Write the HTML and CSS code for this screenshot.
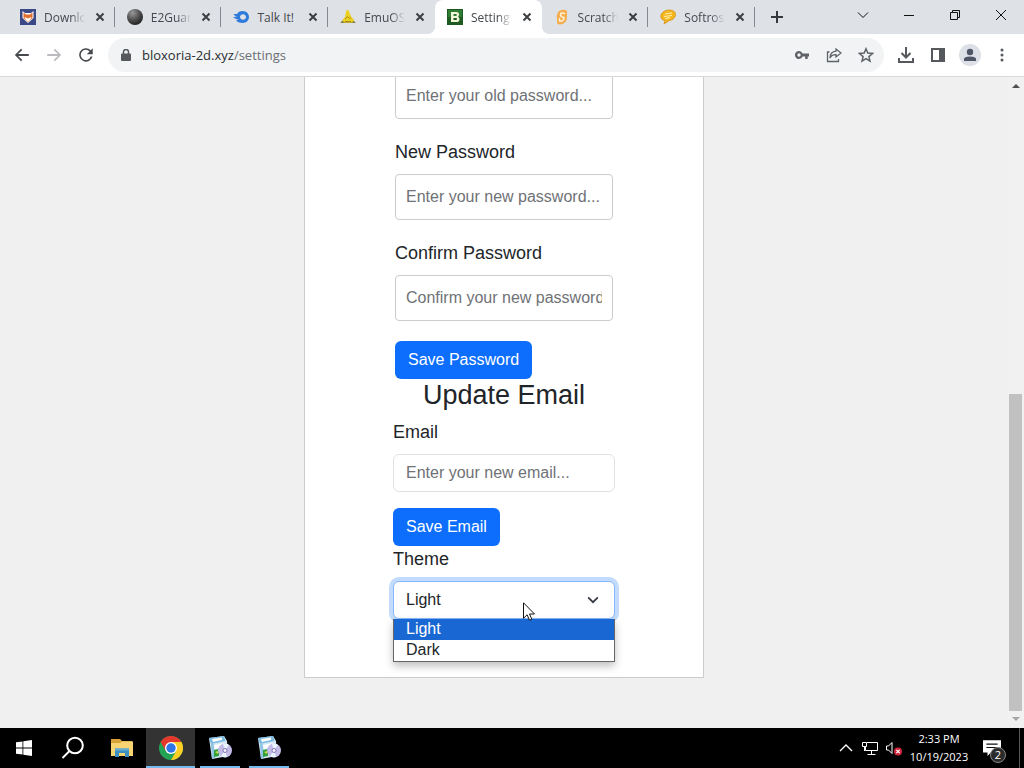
FILE: index.html
```html
<!DOCTYPE html>
<html lang="en">
<head>
<meta charset="utf-8">
<meta name="viewport" content="width=device-width, initial-scale=1">
<title>Settings</title>
<link rel="stylesheet" href="styles.css">
</head>
<body>
<header class="browser">
  <div class="titlebar">
    <div class="tabs">
      <div class="tab">
        <svg class="favicon" viewBox="0 0 16 16" aria-hidden="true"><path fill="#3b4a86" d="M0 0h16v16H0z"/><path fill="#fff" d="M2.500 2 5 4h6l2.500-2v7L8 14 2.500 9z"/><path fill="#e0702d" d="m3.500 3.500 2.500 2h4l2.500-2V9L8 13 3.500 9z"/><path fill="#fff" d="M4.500 8 8 9.500 11.500 8 10 11l-2 1.500L6 11z"/></svg>
        <button class="tab-title">Download</button><button class="tab-close" aria-label="Close tab"><svg viewBox="0 0 10 10"><path d="m1.500 1.500 7 7m0-7-7 7"/></svg></button>
      </div>
      <div class="tab">
        <svg class="favicon" viewBox="0 0 16 16" aria-hidden="true"><defs><radialGradient id="ball" cx=".35" cy=".25" r=".8"><stop offset="0" stop-color="#999"/><stop offset=".5" stop-color="#555"/><stop offset="1" stop-color="#1d1d1d"/></radialGradient></defs><circle cx="8" cy="8" r="8" fill="url(#ball)"/></svg>
        <button class="tab-title">E2Guardian</button><button class="tab-close" aria-label="Close tab"><svg viewBox="0 0 10 10"><path d="m1.500 1.500 7 7m0-7-7 7"/></svg></button>
      </div>
      <div class="tab">
        <svg class="favicon" viewBox="0 0 16 16" aria-hidden="true"><path fill="#2f7bdc" fill-rule="evenodd" d="M4 5C5 3 7 2 9.500 2 13.500 2 16 4.800 16 8s-2.500 6-6.500 6C6.500 14 4 13 3 11l3-.5Q2 10 0 8l4-.2Q1.500 7 .5 5zm6 .3C8.500 5.300 7 6.500 7 8s1.500 2.700 3 2.700S13 9.500 13 8s-1.500-2.700-3-2.700z"/></svg>
        <button class="tab-title tab-title-whole">Talk It!</button><button class="tab-close" aria-label="Close tab"><svg viewBox="0 0 10 10"><path d="m1.500 1.500 7 7m0-7-7 7"/></svg></button>
      </div>
      <div class="tab tab-plain">
        <svg class="favicon" viewBox="0 0 16 16" aria-hidden="true"><path fill="#8f8340" d="m0 14 5-5h6l5 5z"/><path fill="#ecd022" d="M6.500 1h2L10 5l1.500 3 2.500 3-2 2.500H4L2.500 11 5 8l.500-3z"/><path fill="none" stroke="#a88b14" d="m5 10 2.500-2.500 2 2 1.500-1M5 12.500h6"/></svg>
        <button class="tab-title">EmuOS v1</button><button class="tab-close" aria-label="Close tab"><svg viewBox="0 0 10 10"><path d="m1.500 1.500 7 7m0-7-7 7"/></svg></button>
      </div>
      <div class="tab tab-active">
        <svg class="favicon" viewBox="0 0 16 16" aria-hidden="true"><path fill="#1e5b22" d="M0 0h16v16H0z"/><path fill="#2f7d32" d="M1 1h14v7H1z"/><path fill="#f2f7d8" fill-rule="evenodd" d="M4 3h5.500Q12 3 12 5.500 12 7 11 7.700q1.500.6 1.500 2.500 0 2.800-3 2.800H4zm2.500 2v2H9q.8 0 .8-1T9 5zm0 4v2h2.700q.8 0 .8-1t-.8-1z"/></svg>
        <button class="tab-title">Settings</button><button class="tab-close" aria-label="Close tab"><svg viewBox="0 0 10 10"><path d="m1.500 1.500 7 7m0-7-7 7"/></svg></button>
      </div>
      <div class="tab">
        <svg class="favicon" viewBox="0 0 16 16" aria-hidden="true"><path fill="#f5ad4c" d="M5 2q5-2.500 8 0v6q0 7-7 7.500-3 0-3-2.500V9q-1-4 2-7z"/><path fill="none" stroke="#fff1d8" stroke-width="1.500" stroke-linecap="round" stroke-linejoin="round" d="M10.500 4.500Q6.500 3 6.500 5.500T10 8.500q0 4-4.500 3.500V9.500"/></svg>
        <button class="tab-title">Scratch -</button><button class="tab-close" aria-label="Close tab"><svg viewBox="0 0 10 10"><path d="m1.500 1.500 7 7m0-7-7 7"/></svg></button>
      </div>
      <div class="tab">
        <svg class="favicon" viewBox="0 0 16 16" aria-hidden="true"><path fill="#f4b51d" stroke="#d3921a" stroke-width=".8" d="M9 1c4 0 6.500 1.500 6.500 4.500S13 11 9.500 11.500L4 15l1-3.500C2 11 .8 9.500.8 7.500.8 4 4.500 1 9 1z"/><path fill="none" stroke="#fff0ad" stroke-width="1.200" d="m5 5 7-1M4 7.500l8-1M5 9.500l5-.8"/></svg>
        <button class="tab-title">Softros LAN</button><button class="tab-close" aria-label="Close tab"><svg viewBox="0 0 10 10"><path d="m1.500 1.500 7 7m0-7-7 7"/></svg></button>
      </div>
    </div>
    <button class="new-tab" aria-label="New tab"><svg viewBox="0 0 12 12"><path d="M6 0v12M0 6h12"/></svg></button>
    <div class="window-controls">
      <button aria-label="Search tabs"><svg viewBox="0 0 12 12"><path d="m1 3.500 5 5 5-5"/></svg></button>
      <button aria-label="Minimize"><svg viewBox="0 0 12 12"><path d="M1 6.500h10"/></svg></button>
      <button aria-label="Restore"><svg viewBox="0 0 12 12"><path d="M1.500 3.500h7v7h-7zM3.500 3.500v-2h7v7h-2"/></svg></button>
      <button aria-label="Close"><svg viewBox="0 0 12 12"><path d="m1 1 10 10M11 1 1 11"/></svg></button>
    </div>
  </div>
  <nav class="toolbar" aria-label="Browser toolbar">
    <button class="tool" aria-label="Back"><svg viewBox="0 0 24 24"><path fill="#45484c" d="M21 10.800H6.800l5.600-5.400L10.700 3.700l-8.200 8.300 8.200 8.300 1.700-1.700-5.600-5.400H21z"/></svg></button>
    <button class="tool" aria-label="Forward" disabled><svg viewBox="0 0 24 24"><path fill="#b9bbbe" d="m13.300 3.700-1.700 1.700 5.600 5.400H3v2.400h14.200l-5.600 5.400 1.700 1.700 8.200-8.300z"/></svg></button>
    <button class="tool" aria-label="Reload"><svg viewBox="0 0 24 24"><path fill="#45484c" d="M18.400 5.600A9 9 0 1 0 20.700 14h-2.400A6.800 6.800 0 1 1 16.800 7.200L13 11h8V3z"/></svg></button>
    <div class="omnibox">
      <svg class="lock" viewBox="0 0 10 12" aria-hidden="true"><path fill="none" stroke="#55585c" stroke-width="1.500" d="M2.500 5.500V3a2.500 2.500 0 0 1 5 0v2.500"/><rect y="4.500" width="10" height="7.500" rx="1" fill="#55585c"/></svg>
      <a class="address" href="#settings">bloxoria-2d.xyz<span class="path">/settings</span></a>
      <button class="tool" aria-label="Saved passwords"><svg viewBox="0 0 16 16"><path fill="#5f6368" fill-rule="evenodd" d="M8.600 6.500H15v3h-1.300V12h-2.500V9.500H8.600A4 4 0 1 1 8.600 6.500zM5 6.300A1.700 1.700 0 1 0 5 9.700a1.700 1.700 0 0 0 0-3.400z"/></svg></button>
      <button class="tool" aria-label="Share"><svg viewBox="0 0 16 16"><path fill="none" stroke="#5f6368" stroke-width="1.300" d="M3.500 5H1.500v9.500h11V12M10 2l5 4-5 4V7.700C7 7.500 5 9 4 11c.2-4 2.500-6.500 6-6.800z"/></svg></button>
      <button class="tool" aria-label="Bookmark"><svg viewBox="0 0 16 16"><path fill="none" stroke="#5f6368" stroke-width="1.500" d="m8 1.800 1.800 4.300 4.700.4-3.600 3.100 1.100 4.600L8 11.700l-4 2.500 1.100-4.600L1.500 6.500l4.700-.4z"/></svg></button>
    </div>
    <button class="tool" aria-label="Downloads"><svg viewBox="0 0 18 18"><path fill="none" stroke="#55585c" stroke-width="2" d="M9 1v10M4.500 7 9 11.500 13.500 7M2 12v4h14v-4"/></svg></button>
    <button class="tool" aria-label="Side panel"><svg viewBox="0 0 18 18"><path fill="none" stroke="#55585c" stroke-width="2" d="M3 3h12v12H3z"/><path fill="#55585c" d="M10 3h5v12h-5z"/></svg></button>
    <button class="tool profile" aria-label="Profile"><svg viewBox="0 0 16 16"><circle cx="8" cy="5" r="3.200" fill="#4d5566"/><path fill="#4d5566" d="M2 14v-2q0-2.500 6-2.500t6 2.500v2z"/></svg></button>
    <button class="tool menu" aria-label="Menu"><svg viewBox="0 0 16 16"><g fill="#55585c"><circle cx="8" cy="3" r="1.500"/><circle cx="8" cy="8" r="1.500"/><circle cx="8" cy="13" r="1.500"/></g></svg></button>
  </nav>
</header>

<div class="viewport">
  <main class="page">
    <div class="panel">
      <form class="password-form">
        <input class="field old-password" type="password" placeholder="Enter your old password..." aria-label="Old password">
        <label for="new-password">New Password</label>
        <input class="field" id="new-password" type="password" placeholder="Enter your new password...">
        <label for="confirm-password">Confirm Password</label>
        <input class="field" id="confirm-password" type="password" placeholder="Confirm your new password...">
        <button class="primary" type="button">Save Password</button>
      </form>
      <h2>Update Email</h2>
      <form class="email-form">
        <label for="email">Email</label>
        <input class="control" id="email" type="email" placeholder="Enter your new email...">
        <button class="primary" type="button">Save Email</button>
        <label for="theme">Theme</label>
        <div class="select-wrap">
          <select class="control focused" id="theme"><option>Light</option><option>Dark</option></select>
          <svg class="chevron" viewBox="0 0 16 16" aria-hidden="true"><path d="m3 5.500 5 5 5-5"/></svg>
          <ul class="options" role="listbox" aria-label="Theme">
            <li role="option" aria-selected="true">Light</li>
            <li role="option" aria-selected="false">Dark</li>
          </ul>
          <svg class="cursor" viewBox="0 0 12 19" aria-hidden="true"><path fill="#fff" stroke="#111" d="M.5.800v15.500l3.600-3.500 2.400 5.400 2.300-1-2.300-5.200h5z"/></svg>
        </div>
      </form>
    </div>
  </main>
  <div class="scrollbar" aria-hidden="true">
    <svg viewBox="0 0 16 17"><path fill="#505050" d="m8 7 4 4H4z"/></svg>
    <div class="track"><div class="thumb"></div></div>
    <svg viewBox="0 0 16 17"><path fill="#a3a3a3" d="m8 10 4-4H4z"/></svg>
  </div>
</div>

<footer class="taskbar">
  <button class="task task-start" aria-label="Start"><svg class="start-icon" viewBox="0 0 16 16"><path fill="#fff" d="m0 2.300 6.500-.9v6.200H0zM7.300 1.300 16 0v7.600H7.300zM0 8.400h6.500v6.200L0 13.700zM7.300 8.400H16V16l-8.700-1.300z"/></svg></button>
  <button class="task" aria-label="Search"><svg viewBox="0 0 24 24"><g fill="none" stroke="#fff" stroke-width="2"><circle cx="14" cy="9.500" r="7.800"/><path d="M8.500 15 1.500 22"/></g></svg></button>
  <button class="task" aria-label="File Explorer"><svg viewBox="0 0 24 24"><path fill="#d9a33a" d="M1 3h9l2 2h10v5H1z"/><path fill="#f8d572" d="M1 7h9l2-1.500h11V20H1z"/><path fill="#3f8fc0" d="M5 12.500h14V21h-4v-4H9v4H5z"/><path fill="#65afd6" d="M5 12.500h14v2H5z"/></svg></button>
  <button class="task task-current" aria-label="Google Chrome"><svg viewBox="0 0 24 24"><circle cx="12" cy="12" r="12" fill="#23a455"/><path fill="#e5382c" d="M1.600 6A12 12 0 0 1 22.400 6H12L6.800 15z"/><path fill="#fbcf25" d="M22.400 6A12 12 0 0 1 12 24l5.200-9L12 6z"/><circle cx="12" cy="12" r="6" fill="#fff"/><circle cx="12" cy="12" r="4.700" fill="#2f75e8"/></svg></button>
  <button class="task task-open" aria-label="Setup"><svg viewBox="0 0 24 24"><path fill="#d4e9f4" d="m1 2 15-2 3 5 1 15-16 3z"/><path fill="#7dbbe0" d="m1 2 15-2 1.500 5L3 8z"/><path fill="#fff" d="m4 3 10-1.500v2.500L5 6zM6 9l11-2v4L7 13z"/><path fill="#8fc4e2" d="m3 8 2.500-.5L7 22l-3 1z"/><path fill="#2f9f3b" d="m6 14 5-1v7l-5 1z"/><path fill="#d8dc46" d="m7 16 3-1v3z"/><circle cx="17" cy="14.500" r="7" fill="#c3bce6"/><path fill="#e9f5ff" d="m17 14.500-2-6.500q4-1 6 1zM17 14.500l2 6.500q-4 1-6-1z"/><circle cx="17" cy="14.500" r="2" fill="#f7f5ff" stroke="#8177ba"/></svg></button>
  <button class="task task-open" aria-label="Setup, second window"><svg viewBox="0 0 24 24"><path fill="#d4e9f4" d="m1 2 15-2 3 5 1 15-16 3z"/><path fill="#7dbbe0" d="m1 2 15-2 1.500 5L3 8z"/><path fill="#fff" d="m4 3 10-1.500v2.500L5 6zM6 9l11-2v4L7 13z"/><path fill="#8fc4e2" d="m3 8 2.500-.5L7 22l-3 1z"/><path fill="#2f9f3b" d="m6 14 5-1v7l-5 1z"/><path fill="#d8dc46" d="m7 16 3-1v3z"/><circle cx="17" cy="14.500" r="7" fill="#c3bce6"/><path fill="#e9f5ff" d="m17 14.500-2-6.500q4-1 6 1zM17 14.500l2 6.500q-4 1-6-1z"/><circle cx="17" cy="14.500" r="2" fill="#f7f5ff" stroke="#8177ba"/></svg></button>
  <div class="tray">
    <button aria-label="Show hidden icons"><svg viewBox="0 0 16 16"><path fill="none" stroke="#fff" stroke-width="1.400" d="m2 11 6-6 6 6"/></svg></button>
    <button aria-label="Network"><svg viewBox="0 0 16 16"><path fill="none" stroke="#fff" d="M5 2.500h10.500v8H3.500V7M9.500 11v3M5.500 14.500h8M.5 2.500h4v4h-4zM2.500 7v4"/></svg></button>
    <button aria-label="Volume muted"><svg viewBox="0 0 16 16"><path fill="none" stroke="#fff" d="M.5 6h2L6 2.500v11L2.500 10h-2z"/><circle cx="12" cy="11.500" r="4" fill="#d3263c"/><path stroke="#fff" stroke-width="1.200" d="m10.300 9.800 3.400 3.400m0-3.400-3.400 3.400"/></svg></button>
    <button class="clock"><span>2:33 PM</span><span>10/19/2023</span></button>
    <button class="notifications" aria-label="2 notifications"><svg viewBox="0 0 16 16"><path fill="#fff" d="M0 1h16v11H7l-3 3v-3H0z"/><path stroke="#111" d="M3 4.500h10M3 7.500h10"/></svg><span class="badge">2</span></button>
    <div class="desktop-edge"></div>
  </div>
</footer>
</body>
</html>
```

FILE: styles.css
```css
* { box-sizing: border-box; }

body {
  margin: 0;
  height: 100vh;
  display: flex;
  flex-direction: column;
  overflow: hidden;
  background: #f0f0f0;
  color: #212529;
  font-family: "Liberation Sans", Arial, sans-serif;
  font-size: 16px;
}

button {
  padding: 0;
  border: 0;
  background: none;
  color: inherit;
  font: inherit;
}

svg { display: block; }

/* Browser frame */
.browser {
  flex: none;
  font-family: "Open Sans", "Noto Sans", sans-serif;
  border-bottom: 1px solid #d5d8dc;
  background: #fff;
}

.titlebar {
  height: 34px;
  display: flex;
  align-items: stretch;
  padding-left: 8px;
  background: #dee1e6;
}

.tabs { display: flex; flex: 0 1 747px; min-width: 0; }

.tab {
  flex: 1 1 0;
  min-width: 0;
  display: flex;
  align-items: center;
  padding: 0 10px 0 12px;
  position: relative;
  color: #45494e;
  font-size: 12px;
}

.tab::after {
  content: "";
  position: absolute;
  right: 0;
  top: 7px;
  width: 1px;
  height: 20px;
  background: #85898f;
}

.tab.tab-plain::after { display: none; }

.tab.tab-active {
  background: #fff;
  border-radius: 8px 8px 0 0;
}

.tab-active::before,
.tab.tab-active::after {
  content: "";
  position: absolute;
  top: auto;
  bottom: 0;
  width: 8px;
  height: 8px;
}

.tab-active::before {
  left: -8px;
  background: radial-gradient(circle at 0 0, #dee1e6 8px, #fff 8px);
}

.tab.tab-active::after {
  right: -8px;
  background: radial-gradient(circle at 100% 0, #dee1e6 8px, #fff 8px);
}

.favicon { flex: none; width: 16px; height: 16px; }

.tab-title {
  flex: 1;
  min-width: 0;
  margin: 0 10px 0 8px;
  overflow: hidden;
  white-space: nowrap;
  text-align: left;
  mask-image: linear-gradient(to right, #000 65%, transparent);
}

.tab-title-whole { mask-image: none; }

.tab-close { flex: none; }
.tab-close svg { width: 10px; height: 10px; }
.tab-close path { stroke: #3c4043; stroke-width: 2; }

.new-tab { flex: none; width: 44px; display: grid; place-items: center; }
.new-tab svg { width: 12px; height: 12px; }
.new-tab path { stroke: #35383c; stroke-width: 2; }

.window-controls { flex: none; display: flex; margin-left: auto; align-items: center; height: 29px; }
.window-controls button { width: 46px; height: 28px; display: grid; place-items: center; }
.window-controls svg { width: 12px; height: 12px; }
.window-controls path { fill: none; stroke: #111; }

.toolbar {
  height: 42px;
  display: flex;
  align-items: center;
  padding: 0 6px;
}

.tool {
  flex: none;
  width: 32px;
  height: 32px;
  display: grid;
  place-items: center;
}

.tool svg { width: 18px; height: 18px; }

.omnibox {
  flex: 1;
  min-width: 0;
  height: 34px;
  display: flex;
  align-items: center;
  margin: 0 6px;
  padding: 0 2px 0 13px;
  border-radius: 17px;
  background: #f1f3f4;
}

.omnibox .tool svg { width: 16px; height: 16px; }
.lock { flex: none; width: 10px; height: 12px; }

.address {
  flex: 1;
  min-width: 0;
  margin-left: 11px;
  overflow: hidden;
  white-space: nowrap;
  color: #2a2d31;
  font-size: 13px;
  text-decoration: none;
}

.path { color: #6a6f75; }

.profile::before {
  content: "";
  grid-area: 1 / 1;
  width: 22px;
  height: 22px;
  border-radius: 50%;
  background: #dde0e7;
}

.tool.profile svg { grid-area: 1 / 1; width: 16px; height: 16px; }
.tool.menu svg { width: 16px; height: 16px; }

/* Page, scrolled to its end */
.viewport { flex: 1; min-height: 0; display: flex; }

.page {
  flex: 1;
  min-width: 0;
  display: flex;
  flex-direction: column;
  justify-content: flex-end;
  align-items: center;
  padding-bottom: 50px;
  overflow: hidden;
}

.panel {
  flex: none;
  width: 400px;
  max-width: 100%;
  display: flex;
  flex-direction: column;
  align-items: center;
  padding: 32px 0 58px;
  border: 1px solid #ccc;
  background: #fff;
}

.password-form,
.email-form {
  display: flex;
  flex-direction: column;
  align-items: flex-start;
}

.password-form { width: 218px; }
.email-form { width: 222px; }

label {
  margin-bottom: 8px;
  font-size: 18px;
  line-height: 27px;
}

.field,
.control {
  width: 100%;
  font: inherit;
  color: #212529;
  background: #fff;
  outline: 0;
}

.field {
  height: 46px;
  margin: 0 0 20px;
  padding: 0 10px;
  border: 1px solid #ccc;
  border-radius: 4px;
}

.control {
  height: 38px;
  margin: 0;
  padding: 0 12px;
  border: 1px solid #dee2e6;
  border-radius: 6px;
}

#email { margin-bottom: 16px; }

.field::placeholder,
.control::placeholder { color: #6f7276; opacity: 1; }

.primary {
  height: 38px;
  padding: 0 13px;
  border-radius: 6px;
  background: #0d6efd;
  color: #fff;
}

h2 {
  margin: 0 0 8px;
  font-size: 27px;
  font-weight: 400;
  line-height: 32px;
}

.select-wrap { position: relative; width: 100%; }

select.control { display: block; appearance: none; padding-bottom: 2px; }

.focused {
  border-color: #86b7fe;
  box-shadow: 0 0 0 4px rgba(13, 110, 253, .25);
}

.chevron {
  position: absolute;
  right: 15px;
  top: 12px;
  width: 14px;
  height: 14px;
}

.chevron path { fill: none; stroke: #343a40; stroke-width: 2; stroke-linecap: round; }

.options {
  position: absolute;
  left: 0;
  right: 0;
  top: 100%;
  margin: 0;
  padding: 0;
  list-style: none;
  border: 1px solid #666;
  border-top: 0;
  background: #fff;
  box-shadow: 0 4px 8px rgba(0, 0, 0, .25);
}

.options li { padding: 0 12px; height: 21px; line-height: 19px; }
.options [aria-selected="true"] { background: #1967d2; color: #fff; }

.cursor {
  position: absolute;
  left: 130px;
  top: 21px;
  width: 12px;
  height: 19px;
}

.scrollbar {
  flex: none;
  width: 16px;
  display: flex;
  flex-direction: column;
  background: #f1f1f1;
}

.scrollbar svg { flex: none; width: 16px; height: 17px; }

.track {
  flex: 1;
  display: flex;
  flex-direction: column;
  justify-content: flex-end;
  padding: 0 2px 0 1px;
}

.thumb { height: 51.4%; background: #c1c1c1; }

/* Taskbar */
.taskbar {
  flex: none;
  height: 40px;
  display: flex;
  background: #000;
  color: #fff;
  font-family: "Open Sans", "Noto Sans", sans-serif;
}

.task {
  flex: none;
  width: 49px;
  display: grid;
  place-items: center;
  position: relative;
}

.task-start { width: 48px; }
.task svg { width: 24px; height: 24px; }
.task .start-icon { width: 16px; height: 16px; }
.task-current { background: #333; }

.task-current::after,
.task-open::after {
  content: "";
  position: absolute;
  left: 5px;
  right: 4px;
  bottom: 0;
  height: 2px;
  background: #76b9ed;
}

.task-current::after { left: 0; right: 0; }

.tray { display: flex; align-items: center; margin-left: auto; }
.tray button { width: 24px; display: grid; place-items: center; }
.tray svg { width: 16px; height: 16px; }

.tray .clock {
  width: 60px;
  margin-left: 3px;
  font-size: 11px;
  line-height: 18px;
}

.tray .notifications { width: 46px; height: 40px; position: relative; }
.notifications svg { width: 18px; height: 18px; }

.badge {
  position: absolute;
  left: 21px;
  top: 19px;
  width: 16px;
  height: 16px;
  border: 1px solid #888;
  border-radius: 50%;
  background: #2b2b2b;
  font-size: 11px;
  line-height: 14px;
}

.desktop-edge { width: 5px; height: 40px; margin-left: 4px; border-left: 1px solid #555; }
```
